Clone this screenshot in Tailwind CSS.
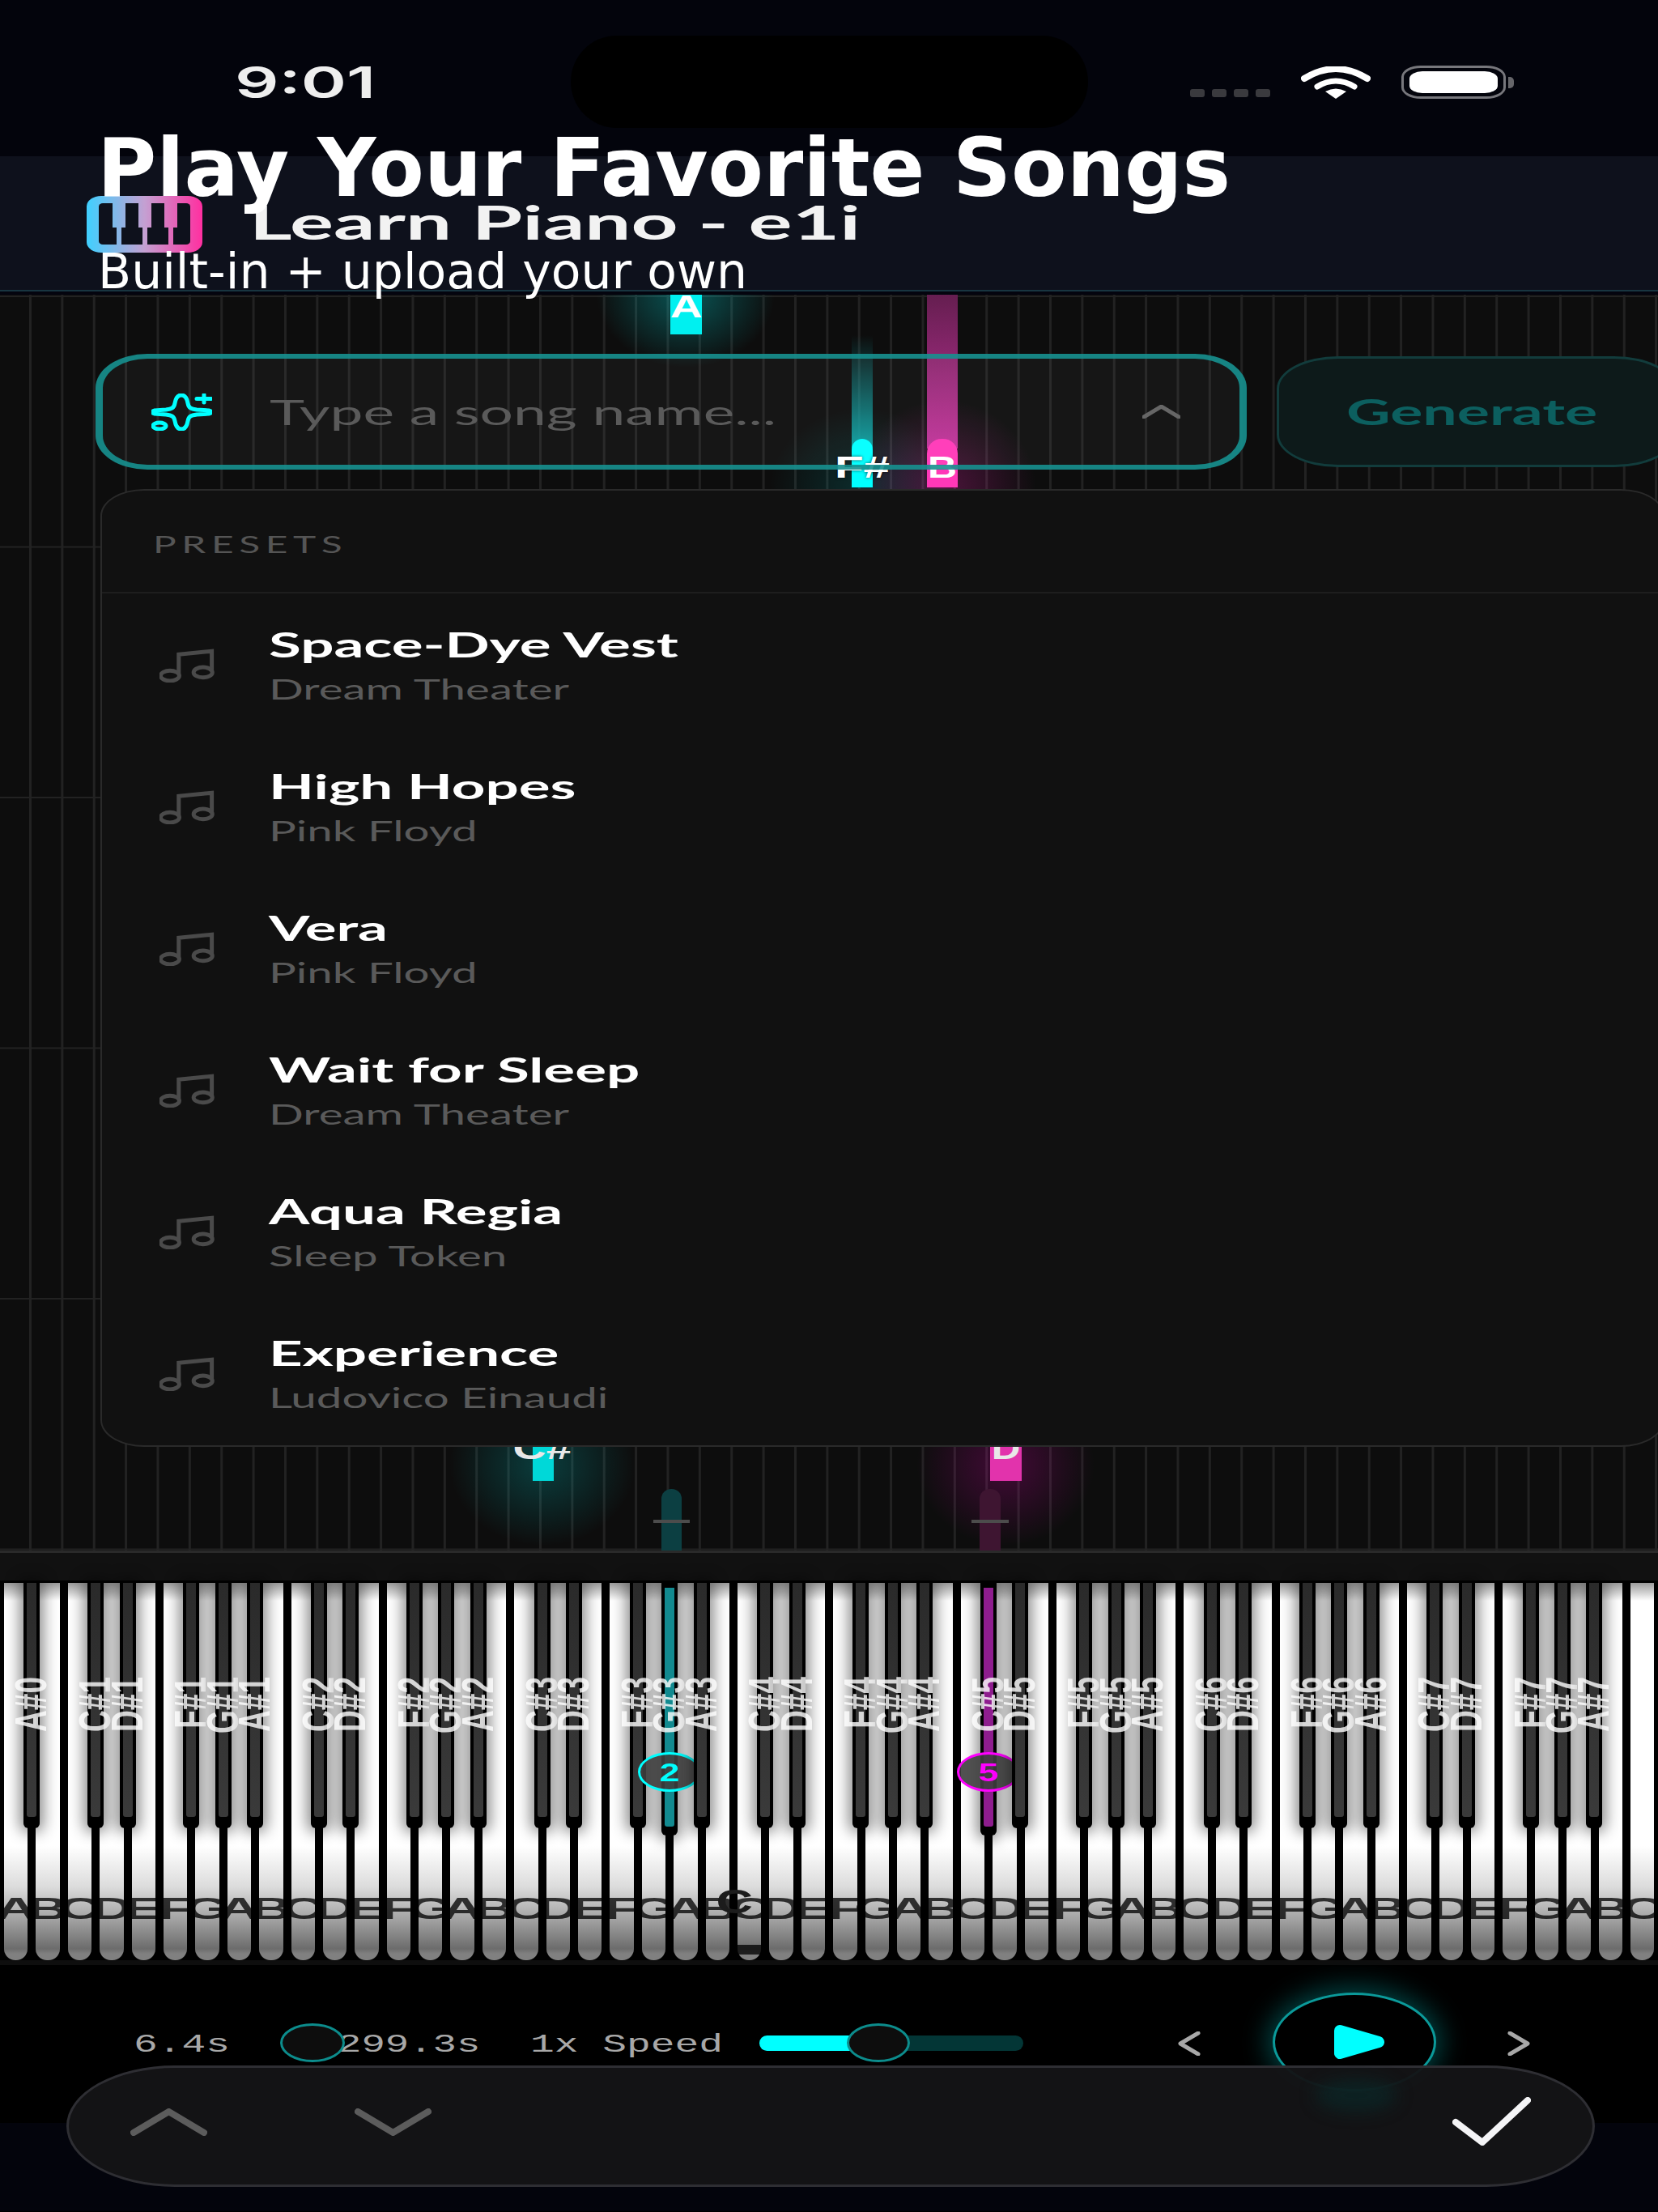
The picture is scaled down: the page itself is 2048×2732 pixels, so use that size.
<!DOCTYPE html>
<html>
<head>
<meta charset="utf-8">
<script src="https://cdn.jsdelivr.net/npm/@tailwindcss/browser@4"></script>
</head>
<body class="bg-black">
<div class="relative w-[2048px] h-[2732px] overflow-hidden bg-black text-white font-['Lato',sans-serif]">

  <!-- status bar -->
  <div class="relative h-[193px] bg-[#03040c] flex items-start pt-[70px]">
    <span class="inline-block ml-[290px] origin-left scale-x-[1.58] font-['Inter',sans-serif] font-semibold text-[54px] leading-[64px] text-[#eeeeee]">9:01</span>
    <div class="absolute left-[705px] top-[44px] w-[639px] h-[114px] rounded-[57px] bg-black"></div>
    <div class="absolute left-[1470px] top-[110px] flex gap-[9px]">
      <span class="w-[18px] h-[10px] rounded-[3px] bg-[#3a3a3e]"></span>
      <span class="w-[18px] h-[10px] rounded-[3px] bg-[#3a3a3e]"></span>
      <span class="w-[18px] h-[10px] rounded-[3px] bg-[#3a3a3e]"></span>
      <span class="w-[18px] h-[10px] rounded-[3px] bg-[#3a3a3e]"></span>
    </div>
    <svg class="absolute left-[1607px] top-[82px] w-[86px] h-[40px]" viewBox="0 0 86 40" fill="none">
      <path d="M4 15 Q43 -9 82 15" stroke="#fff" stroke-width="8" stroke-linecap="round"/>
      <path d="M20 25 Q43 11 66 25" stroke="#fff" stroke-width="7" stroke-linecap="round"/>
      <path d="M43 40 L30 31 Q43 24 56 31 Z" fill="#fff"/>
    </svg>
    <div class="absolute left-[1731px] top-[81px] flex items-center">
      <div class="w-[129px] h-[41px] border-[3px] border-[#77777c] rounded-[24px/14px] p-[4px_7px]">
        <div class="w-full h-full bg-white rounded-[16px/9px]"></div>
      </div>
      <div class="ml-[3px] w-[7px] h-[14px] bg-[#66666a] rounded-r-[5px]"></div>
    </div>
  </div>

  <!-- app header -->
  <div class="h-[165px] bg-[#0e111c] flex items-center pl-[107px]">
    <svg class="w-[143px] h-[70px] mt-[3px]" viewBox="0 0 143 70">
      <defs>
        <linearGradient id="lg" gradientUnits="userSpaceOnUse" x1="0" y1="0" x2="143" y2="0">
          <stop offset="0" stop-color="#3fd0ff"/>
          <stop offset="0.5" stop-color="#c4a0d2"/>
          <stop offset="1" stop-color="#ff2fa0"/>
        </linearGradient>
      </defs>
      <rect x="0" y="0" width="143" height="70" rx="18" ry="13" fill="url(#lg)"/>
      <rect x="15" y="9" width="113" height="51" rx="5" ry="4" fill="#0e111c"/>
      <path d="M32 9h16v30h-5v21h-6v-21h-5z M64 9h16v30h-5v21h-6v-21h-5z M96 9h16v30h-5v21h-6v-21h-5z" fill="url(#lg)"/>
    </svg>
    <span class="inline-block ml-[58px] mt-[-4px] origin-left scale-x-[1.745] font-bold text-[58px] leading-none text-[#f2f2f2]">Learn Piano - e1i</span>
  </div>
  <div class="h-[2px] bg-[#183540]"></div>
  <div class="h-[4px] bg-[#04040e]"></div>

  <!-- falling notes canvas -->
  <div class="relative h-[1551px] overflow-hidden bg-[#0d0d0d] bg-[image:linear-gradient(90deg,#222222_2.5px,transparent_2.5px),linear-gradient(0deg,#222222_2px,transparent_2px)] bg-[size:39.385px_100%,100%_309.5px] bg-[position:36px_0,0_3px]">
    <!-- glows -->
    <div class="absolute left-[737px] top-[-90px] w-[220px] h-[180px] bg-[radial-gradient(closest-side,rgba(0,255,255,.3),transparent)]"></div>
    <div class="absolute left-[950px] top-[140px] w-[230px] h-[200px] bg-[radial-gradient(closest-side,rgba(0,255,255,.13),transparent)]"></div>
    <div class="absolute left-[1050px] top-[130px] w-[230px] h-[220px] bg-[radial-gradient(closest-side,rgba(255,40,190,.26),transparent)]"></div>
    <div class="absolute left-[555px] top-[1345px] w-[230px] h-[200px] bg-[radial-gradient(closest-side,rgba(0,255,255,.2),transparent)]"></div>
    <div class="absolute left-[1132px] top-[1345px] w-[220px] h-[200px] bg-[radial-gradient(closest-side,rgba(255,0,200,.22),transparent)]"></div>

    <!-- A -->
    <div class="absolute left-[828px] top-0 w-[39px] h-[49px] bg-[#00f0f0] flex justify-center">
      <span class="inline-block scale-x-[1.45] font-['Liberation_Sans',sans-serif] font-bold text-[38px] leading-[30px] text-white">A</span>
    </div>
    <!-- F# -->
    <div class="absolute left-[1052px] top-[50px] w-[26px] h-[140px] bg-[linear-gradient(180deg,transparent,#0d9ea0)]"></div>
    <div class="absolute left-[1052px] top-[178px] w-[26px] h-[60px] bg-[#00ffff] rounded-t-[13px]"></div>
    <!-- B -->
    <div class="absolute left-[1145px] top-0 w-[38px] h-[190px] bg-[linear-gradient(180deg,#651e50,#c2339a)]"></div>
    <div class="absolute left-[1145px] top-[178px] w-[38px] h-[60px] bg-[#ff38b8] rounded-t-[18px]"></div>
    <span class="absolute left-[1030px] top-[196px] w-[70px] text-center scale-x-[1.58] font-['Liberation_Sans',sans-serif] font-bold text-[37px] leading-[36px] text-white [text-shadow:0_0_3px_rgba(0,0,0,.7)]">F#</span>
    <span class="absolute left-[1145px] top-[196px] w-[38px] text-center scale-x-[1.35] font-['Liberation_Sans',sans-serif] font-bold text-[37px] leading-[36px] text-white">B</span>
    <!-- C# -->
    <div class="absolute left-[658px] top-[1415px] w-[26px] h-[50px] bg-[#00d8d8]"></div>
    <span class="absolute left-[630px] top-[1410px] w-[80px] text-center scale-x-[1.5] font-['Liberation_Sans',sans-serif] font-bold text-[38px] leading-[30px] text-[#e8e8e8]">C#</span>
    <!-- D -->
    <div class="absolute left-[1223px] top-[1415px] w-[39px] h-[50px] bg-[#e233ac]"></div>
    <span class="absolute left-[1223px] top-[1410px] w-[39px] text-center scale-x-[1.3] font-['Liberation_Sans',sans-serif] font-bold text-[38px] leading-[30px] text-[#e8e8e8]">D</span>
    <!-- ghost notes -->
    <div class="absolute left-[817px] top-[1475px] w-[25px] h-[76px] bg-[#0c3f42] rounded-t-[12px]"></div>
    <div class="absolute left-[807px] top-[1513px] w-[45px] h-[4px] bg-[#4c4c4c]"></div>
    <div class="absolute left-[1210px] top-[1475px] w-[26px] h-[76px] bg-[#3e1531] rounded-t-[12px]"></div>
    <div class="absolute left-[1200px] top-[1513px] w-[46px] h-[4px] bg-[#4c4c4c]"></div>

    <!-- search + dropdown -->
    <div class="absolute left-[118px] top-[73px] w-[1960px] flex flex-col">
      <div class="flex items-start">
        <div class="w-[1422px] h-[143px] flex items-center rounded-[64px/42px] border-x-[9px] border-y-[6px] border-[#16908f]/90 bg-white/[0.04] pl-[60px]">
          <svg class="w-[75px] h-[46px]" viewBox="0 0 75 46" fill="none" stroke="#00ffff">
            <path vector-effect="non-scaling-stroke" stroke-width="5" d="M37 2 C42 2 44 6 45 12 C46 18 49 19 56 20 L71 21 C75 22 75 24 71 25 L56 26 C49 27 46 28 45 34 C44 40 42 44 37 44 C32 44 30 40 29 34 C28 28 25 27 18 26 L4 25 C0 24 0 22 4 21 L18 20 C25 19 28 18 29 12 C30 6 32 2 37 2Z"/>
            <path vector-effect="non-scaling-stroke" stroke-width="5" stroke-linecap="round" d="M56 6.5H74 M65 1.5V11"/>
            <ellipse vector-effect="non-scaling-stroke" stroke-width="5" cx="10" cy="40" rx="8" ry="4"/>
          </svg>
          <span class="inline-block ml-[71px] w-[1000px] origin-left scale-x-[1.7] text-[43px] leading-none text-[#5a5a5a]">Type a song name...</span>
          <svg class="w-[47px] h-[17px] ml-[78px]" viewBox="0 0 47 17" fill="none" stroke="#666666" stroke-width="5" stroke-linecap="round"><path vector-effect="non-scaling-stroke" d="M2 15 L23.5 2 L45 15"/></svg>
        </div>
        <div class="ml-[37px] mt-[3px] w-[493px] h-[137px] flex items-center pl-[83px] rounded-[76px/40px] border-[3px] border-[#123c3c] bg-[#0d1a1a]">
          <span class="inline-block origin-left scale-x-[1.75] font-bold text-[43px] leading-none text-[#0c5f5f]">Generate</span>
        </div>
      </div>
      <div class="ml-[6px] mt-[24px] w-[1932px] rounded-[54px/33px] border-2 border-[#2a2a2a] bg-[#111111] pb-[2px]">
        <div class="h-[127px] border-b-2 border-[#1e1e1e] pl-[63px] pt-[51px]">
          <span class="block origin-left scale-x-[1.65] text-[29px] leading-[30px] tracking-[4px] text-[#555555]">PRESETS</span>
        </div>
        <div id="rows" class="flex flex-col"></div>
      </div>
    </div>
  </div>

  <!-- keyboard -->
  <div class="h-[3px] bg-[#2a2a2a]"></div>
  <div class="h-[34px] bg-[#111111]"></div>
  <div id="piano" class="relative h-[469px] bg-black isolate border-t-[3px] border-black">
    <div id="whites" class="absolute inset-0 flex"></div>
    <div id="letters" class="absolute inset-0 flex mix-blend-multiply"></div>
    <div id="blacks" class="absolute inset-0"></div>
  </div>
  <div class="h-[6px] bg-[#0e0e0e]"></div>

  <!-- transport -->
  <div class="relative h-[195px] bg-black flex items-start pt-[72px] pl-[165px] font-['Liberation_Mono',monospace] text-[32px] leading-[40px] text-[#a8a8a8]">
    <span class="inline-block w-[181px] origin-left scale-x-[1.55] mt-[7px]">6.4s</span>
    <div class="w-[80px] h-[48px] rounded-[50%] border-[3px] border-[#0c8c8c] bg-[#0d0d0d] z-10"></div>
    <span class="inline-block w-[238px] ml-[-9px] origin-left scale-x-[1.53] mt-[7px]">299.3s</span>
    <span class="inline-block w-[283px] origin-left scale-x-[1.55] mt-[7px]">1x Speed</span>
    <div class="relative w-[326px] h-[19px] mt-[15px] rounded-full bg-[#033636]">
      <div class="w-[130px] h-full rounded-l-full bg-[#00ffff]"></div>
      <div class="absolute left-[108px] top-[-15px] w-[78px] h-[48px] rounded-[50%] border-[3px] border-[#0c8c8c] bg-[#0d0d0d]"></div>
    </div>
    <svg class="w-[28px] h-[30px] ml-[191px] mt-[10px]" viewBox="0 0 28 30" fill="none" stroke="#a8a8a8" stroke-width="5" stroke-linecap="round" stroke-linejoin="round"><path vector-effect="non-scaling-stroke" d="M25 2 L3 15 L25 28"/></svg>
    <div class="relative w-[202px] h-[122px] ml-[89px] mt-[-38px] rounded-[50%] border-[3px] border-[#0b9a9a] bg-black shadow-[0_0_32px_6px_rgba(0,255,255,.28)] flex items-center justify-center">
      <svg class="w-[64px] h-[44px] ml-[12px]" viewBox="0 0 64 44"><path d="M8 8 L56 22 L8 36 Z" fill="#00ffff" stroke="#00ffff" stroke-width="14" stroke-linejoin="round"/></svg>
    </div>
    <svg class="w-[28px] h-[30px] ml-[88px] mt-[10px]" viewBox="0 0 28 30" fill="none" stroke="#a8a8a8" stroke-width="5" stroke-linecap="round" stroke-linejoin="round"><path vector-effect="non-scaling-stroke" d="M3 2 L25 15 L3 28"/></svg>
  </div>
  <div class="h-[109px] bg-[#03040c]"></div>

  <!-- floating pill -->
  <div class="absolute left-[82px] top-[2551px] w-[1888px] h-[150px] rounded-[134px/75px] border-[3px] border-[#2e2e33] bg-[#141416]/96 flex items-center pl-[76px]">
    <div class="absolute left-[1540px] top-[14px] w-[100px] h-[40px] rounded-[50%] bg-[#05302f]/50 blur-[10px]"></div>
    <svg class="w-[95px] h-[34px] mt-[-10px]" viewBox="0 0 95 34" fill="none" stroke="#5c5c5c" stroke-width="8" stroke-linecap="round" stroke-linejoin="miter"><path vector-effect="non-scaling-stroke" d="M4 30 L47.5 4 L91 30"/></svg>
    <svg class="w-[95px] h-[34px] ml-[182px] mt-[-10px]" viewBox="0 0 95 34" fill="none" stroke="#5c5c5c" stroke-width="8" stroke-linecap="round" stroke-linejoin="miter"><path vector-effect="non-scaling-stroke" d="M4 4 L47.5 30 L91 4"/></svg>
    <svg class="relative w-[97px] h-[60px] ml-auto mr-[76px] mt-[-12px]" viewBox="0 0 97 60" fill="none" stroke="#f4f4f6" stroke-width="8" stroke-linecap="round" stroke-linejoin="round"><path vector-effect="non-scaling-stroke" d="M4 31 L37 56 L93 4"/></svg>
  </div>

  <!-- overlaid page heading -->
  <div class="absolute left-[120px] top-[150px] flex flex-col font-['DejaVu_Sans',sans-serif]">
    <h1 class="font-bold text-[100px] leading-[116px] text-white">Play Your Favorite Songs</h1>
    <p class="text-[60px] leading-[68px] mt-[35px] ml-[1px] text-white">Built-in + upload your own</p>
  </div>
</div>

<script>
const PITCH = 2048 / 52;
const rows = [["Space-Dye Vest","Dream Theater"],["High Hopes","Pink Floyd"],["Vera","Pink Floyd"],["Wait for Sleep","Dream Theater"],["Aqua Regia","Sleep Token"],["Experience","Ludovico Einaudi"]];
document.getElementById('rows').innerHTML = rows.map(r => `
  <div class="h-[175px] flex items-center pl-[71px]">
    <svg class="w-[68px] h-[42px] mt-[2px]" viewBox="2 2 20 20" preserveAspectRatio="none" fill="none" stroke="#4a4a4a"><path vector-effect="non-scaling-stroke" stroke-width="5" d="M9 17V5.5l12-2V15"/><ellipse vector-effect="non-scaling-stroke" stroke-width="5" cx="5.8" cy="18" rx="3.4" ry="3"/><ellipse vector-effect="non-scaling-stroke" stroke-width="5" cx="17.8" cy="16" rx="3.4" ry="3"/></svg>
    <div class="ml-[67px] flex flex-col">
      <span class="block origin-left scale-x-[1.73] font-bold text-[42px] leading-[50px] text-white">${r[0]}</span>
      <span class="block origin-left scale-x-[1.66] mt-[10px] text-[34px] leading-[40px] text-[#5a5a5a]">${r[1]}</span>
    </div>
  </div>`).join('');

const names = 'ABCDEFG';
let w = '', l = '', b = '';
for (let i = 0; i < 52; i++) {
  const n = names[i % 7];
  w += `<div class="flex-1 px-[5px]"><div class="h-full rounded-b-[14px] bg-[linear-gradient(180deg,#9a9a9a_0,#ffffff_22px,#ffffff_325px,#dcdcdc_375px,#9c9c9c_420px,#6c6c6c_452px,#808080_458px,#808080_100%)]"></div></div>`;
  l += `<div class="flex-1 flex justify-center pt-[385px]"><span class="inline-block scale-x-[2] font-['Liberation_Sans',sans-serif] font-bold text-[36px] leading-[36px] text-[#3c3c3c]">${n}</span></div>`;
  if (i < 51 && 'ACDFG'.includes(n)) {
    const oct = Math.floor((i + 5) / 7);
    const x = (i + 1) * PITCH;
    const teal = i === 20, pink = i === 30;
    let strip = `<div class="mx-auto w-[12px] h-[289px] rounded-b-[3px] bg-[linear-gradient(180deg,#2a2a2a,#3a3a3a)]"></div>`;
    if (teal) strip = `<div class="mx-auto mt-[6px] w-[12px] h-[295px] rounded-b-[3px] bg-[#128a90]"></div>`;
    if (pink) strip = `<div class="mx-auto mt-[6px] w-[12px] h-[295px] rounded-b-[3px] bg-[#8e1d8e]"></div>`;
    let circle = '';
    if (teal) circle = `<div class="absolute left-[-29px] top-[209px] w-[78px] h-[49px] rounded-[50%] border-[3px] border-[#00ffff] bg-[#3e3e3e]/90 flex items-center justify-center font-['Liberation_Sans',sans-serif] font-bold text-[32px] text-[#00ffff]"><span class="inline-block scale-x-[1.4]">2</span></div>`;
    if (pink) circle = `<div class="absolute left-[-29px] top-[209px] w-[78px] h-[49px] rounded-[50%] border-[3px] border-[#ff00ff] bg-[#3e3e3e]/90 flex items-center justify-center font-['Liberation_Sans',sans-serif] font-bold text-[32px] text-[#ff00ff]"><span class="inline-block scale-x-[1.4]">5</span></div>`;
    b += `<div class="absolute top-0 w-[20px] ${teal || pink ? 'h-[312px]' : 'h-[303px]'} bg-black rounded-b-[6px] shadow-[0_0_18px_5px_rgba(0,0,0,.45)]" style="left:${(x - 10).toFixed(1)}px">${strip}${circle}<span class="absolute left-1/2 top-[116px] -translate-x-1/2 rotate-180 scale-x-[1.5] [writing-mode:vertical-rl] font-['Liberation_Sans',sans-serif] font-bold text-[37px] leading-[36px] whitespace-nowrap text-white/80">${n}#${oct}</span></div>`;
  }
}
b += `<span class="absolute left-[892px] top-[372px] scale-x-[1.5] font-['Liberation_Sans',sans-serif] font-bold text-[42px] leading-[44px] text-[#1c1c1c]">C</span>`;
l += `<div class="absolute left-[905px] top-[447px] w-[40px] h-[12px] rounded-[4px] bg-[#3c3c3c]"></div>`;
document.getElementById('whites').innerHTML = w;
document.getElementById('letters').innerHTML = l;
document.getElementById('blacks').innerHTML = b;
</script>
</body>
</html>
